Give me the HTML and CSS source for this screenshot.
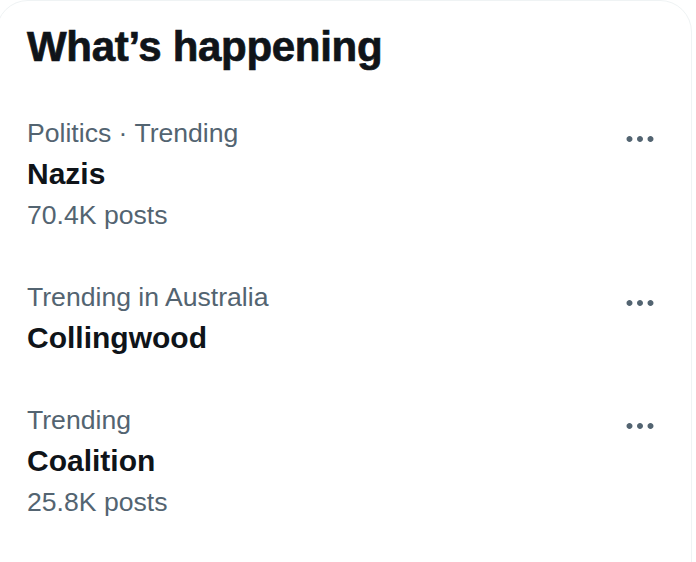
FILE: index.html
```html
<!DOCTYPE html>
<html>
<head>
<meta charset="utf-8">
<link rel="stylesheet" href="styles.css">
</head>
<body>
<section class="card">
  <h2 class="title">What’s happening</h2>
  <div class="trend">
    <div class="info">
      <div class="meta">Politics · Trending</div>
      <div class="name">Nazis</div>
      <div class="meta">70.4K posts</div>
    </div>
    <svg class="more" viewBox="0 0 24 24"><path d="M3 12c0-1.1.9-2 2-2s2 .9 2 2-.9 2-2 2-2-.9-2-2zm9 2c1.1 0 2-.9 2-2s-.9-2-2-2-2 .9-2 2 .9 2 2 2zm7 0c1.1 0 2-.9 2-2s-.9-2-2-2-2 .9-2 2 .9 2 2 2z"/></svg>
  </div>
  <div class="trend">
    <div class="info">
      <div class="meta">Trending in Australia</div>
      <div class="name">Collingwood</div>
    </div>
    <svg class="more" viewBox="0 0 24 24"><path d="M3 12c0-1.1.9-2 2-2s2 .9 2 2-.9 2-2 2-2-.9-2-2zm9 2c1.1 0 2-.9 2-2s-.9-2-2-2-2 .9-2 2 .9 2 2 2zm7 0c1.1 0 2-.9 2-2s-.9-2-2-2-2 .9-2 2 .9 2 2 2z"/></svg>
  </div>
  <div class="trend">
    <div class="info">
      <div class="meta">Trending</div>
      <div class="name">Coalition</div>
      <div class="meta posts">25.8K posts</div>
    </div>
    <svg class="more" viewBox="0 0 24 24"><path d="M3 12c0-1.1.9-2 2-2s2 .9 2 2-.9 2-2 2-2-.9-2-2zm9 2c1.1 0 2-.9 2-2s-.9-2-2-2-2 .9-2 2 .9 2 2 2zm7 0c1.1 0 2-.9 2-2s-.9-2-2-2-2 .9-2 2 .9 2 2 2z"/></svg>
  </div>
</section>
</body>
</html>
```
FILE: styles.css
```css
html, body {
  margin: 0;
  padding: 0;
  background: #ffffff;
  height: 562px;
  overflow: hidden;
}
body {
  font-family: "Liberation Sans", Arial, sans-serif;
  color: #0f1419;
}
.card {
  box-sizing: border-box;
  width: 696px;
  height: 600px;
  margin-left: -4px;
  border: 1px solid #eff3f4;
  border-radius: 32px;
  padding: 0 33px 0 30px;
}
.title {
  margin: 0;
  padding: 22px 0 21px;
  font-size: 42px;
  line-height: 48px;
  font-weight: 700;
  letter-spacing: -0.3px;
  -webkit-text-stroke: 0.7px #0f1419;
}
.trend {
  display: flex;
  justify-content: space-between;
  align-items: flex-start;
  padding: 20.5px 0;
}
.info {
  display: flex;
  flex-direction: column;
}
.meta {
  font-size: 26.6px;
  line-height: 41px;
  color: #536471;
}
.name {
  font-size: 30px;
  line-height: 41px;
  font-weight: 700;
  margin-top: -1px;
  margin-bottom: 1px;
}
.more {
  width: 36px;
  height: 36px;
  margin-top: 8.5px;
  fill: #536471;
}
```
